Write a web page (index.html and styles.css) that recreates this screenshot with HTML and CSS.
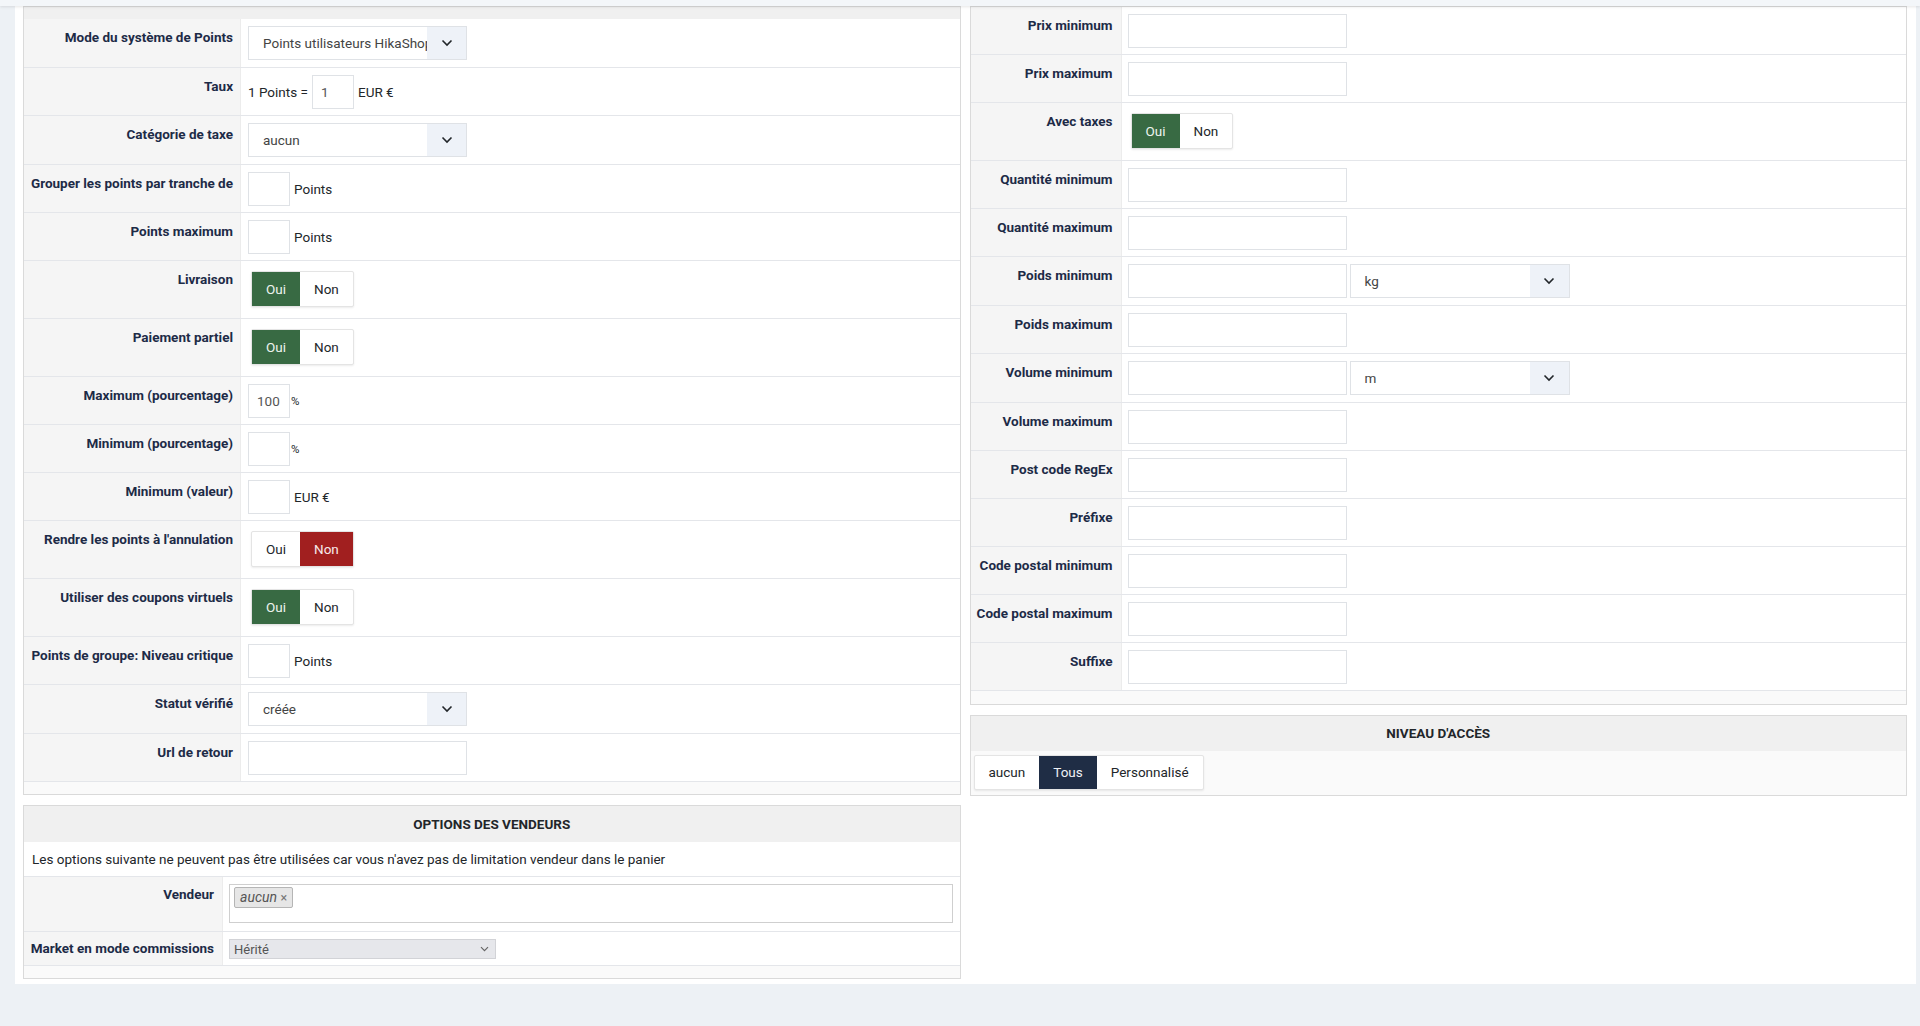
FILE: index.html
```html
<!DOCTYPE html>
<html lang="fr">
<head>
    <meta charset="UTF-8">
    <title>Fidélité - Points</title>
    <link rel="stylesheet" href="styles.css">
</head>
<body>
<div class="topbar"></div>

<div class="page">
    <div class="cols">

        <div class="col">
            <div class="panel panel-points">
                <div class="panel-head panel-head-cut"></div>

                <div class="row">
                    <div class="lbl">Mode du système de Points</div>
                    <div class="fld fld-sel">
                        <div class="select"><span class="select-val">Points utilisateurs HikaShop</span><span class="select-arrow"><svg width="12" height="8" viewBox="0 0 12 8"><path d="M1.5 1.5L6 6l4.5-4.5" fill="none" stroke="#22262a" stroke-width="1.6"/></svg></span></div>
                    </div>
                </div>
                <div class="row">
                    <div class="lbl">Taux</div>
                    <div class="fld fld-rate">
                        <span class="txt">1 Points =</span>
                        <input class="inp inp-s" value="1">
                        <span class="txt">EUR €</span>
                    </div>
                </div>
                <div class="row">
                    <div class="lbl">Catégorie de taxe</div>
                    <div class="fld fld-sel">
                        <div class="select"><span class="select-val">aucun</span><span class="select-arrow"><svg width="12" height="8" viewBox="0 0 12 8"><path d="M1.5 1.5L6 6l4.5-4.5" fill="none" stroke="#22262a" stroke-width="1.6"/></svg></span></div>
                    </div>
                </div>
                <div class="row">
                    <div class="lbl">Grouper les points par tranche de</div>
                    <div class="fld"><input class="inp inp-s"><span class="unit">Points</span></div>
                </div>
                <div class="row">
                    <div class="lbl">Points maximum</div>
                    <div class="fld"><input class="inp inp-s"><span class="unit">Points</span></div>
                </div>
                <div class="row">
                    <div class="lbl">Livraison</div>
                    <div class="fld">
                        <div class="switch"><span class="opt opt-yes">Oui</span><span class="opt">Non</span></div>
                    </div>
                </div>
                <div class="row">
                    <div class="lbl">Paiement partiel</div>
                    <div class="fld">
                        <div class="switch"><span class="opt opt-yes">Oui</span><span class="opt">Non</span></div>
                    </div>
                </div>
                <div class="row">
                    <div class="lbl">Maximum (pourcentage)</div>
                    <div class="fld"><input class="inp inp-s" value="100"><span class="pct">%</span></div>
                </div>
                <div class="row">
                    <div class="lbl">Minimum (pourcentage)</div>
                    <div class="fld"><input class="inp inp-s"><span class="pct">%</span></div>
                </div>
                <div class="row">
                    <div class="lbl">Minimum (valeur)</div>
                    <div class="fld"><input class="inp inp-s"><span class="unit">EUR €</span></div>
                </div>
                <div class="row">
                    <div class="lbl">Rendre les points à l'annulation</div>
                    <div class="fld">
                        <div class="switch"><span class="opt">Oui</span><span class="opt opt-no">Non</span></div>
                    </div>
                </div>
                <div class="row">
                    <div class="lbl">Utiliser des coupons virtuels</div>
                    <div class="fld">
                        <div class="switch"><span class="opt opt-yes">Oui</span><span class="opt">Non</span></div>
                    </div>
                </div>
                <div class="row">
                    <div class="lbl">Points de groupe: Niveau critique</div>
                    <div class="fld"><input class="inp inp-s"><span class="unit">Points</span></div>
                </div>
                <div class="row">
                    <div class="lbl">Statut vérifié</div>
                    <div class="fld fld-sel">
                        <div class="select"><span class="select-val">créée</span><span class="select-arrow"><svg width="12" height="8" viewBox="0 0 12 8"><path d="M1.5 1.5L6 6l4.5-4.5" fill="none" stroke="#22262a" stroke-width="1.6"/></svg></span></div>
                    </div>
                </div>
                <div class="row">
                    <div class="lbl">Url de retour</div>
                    <div class="fld"><input class="inp inp-l"></div>
                </div>

                <div class="panel-foot"></div>
            </div>

            <div class="panel panel-vendor">
                <div class="panel-head">Options des vendeurs</div>
                <div class="row row-note">Les options suivante ne peuvent pas être utilisées car vous n'avez pas de limitation vendeur dans le panier</div>
                <div class="row">
                    <div class="lbl">Vendeur</div>
                    <div class="fld fld-tags">
                        <div class="tagbox"><span class="tag">aucun <span class="tag-x">×</span></span></div>
                    </div>
                </div>
                <div class="row">
                    <div class="lbl lbl-mid">Market en mode commissions</div>
                    <div class="fld fld-mini">
                        <div class="mini-select">Hérité<svg width="9" height="6" viewBox="0 0 9 6"><path d="M1 1.2l3.5 3.5L8 1.2" fill="none" stroke="#666" stroke-width="1.2"/></svg></div>
                    </div>
                </div>
                <div class="panel-foot"></div>
            </div>
        </div>

        <div class="col">
            <div class="panel panel-limits">
                <div class="row">
                    <div class="lbl">Prix minimum</div>
                    <div class="fld"><input class="inp inp-l"></div>
                </div>
                <div class="row">
                    <div class="lbl">Prix maximum</div>
                    <div class="fld"><input class="inp inp-l"></div>
                </div>
                <div class="row">
                    <div class="lbl">Avec taxes</div>
                    <div class="fld">
                        <div class="switch"><span class="opt opt-yes">Oui</span><span class="opt">Non</span></div>
                    </div>
                </div>
                <div class="row">
                    <div class="lbl">Quantité minimum</div>
                    <div class="fld"><input class="inp inp-l"></div>
                </div>
                <div class="row">
                    <div class="lbl">Quantité maximum</div>
                    <div class="fld"><input class="inp inp-l"></div>
                </div>
                <div class="row">
                    <div class="lbl">Poids minimum</div>
                    <div class="fld fld-sel fld-pair">
                        <input class="inp inp-l">
                        <div class="select select-unit"><span class="select-val">kg</span><span class="select-arrow"><svg width="12" height="8" viewBox="0 0 12 8"><path d="M1.5 1.5L6 6l4.5-4.5" fill="none" stroke="#22262a" stroke-width="1.6"/></svg></span></div>
                    </div>
                </div>
                <div class="row">
                    <div class="lbl">Poids maximum</div>
                    <div class="fld"><input class="inp inp-l"></div>
                </div>
                <div class="row">
                    <div class="lbl">Volume minimum</div>
                    <div class="fld fld-sel fld-pair">
                        <input class="inp inp-l">
                        <div class="select select-unit"><span class="select-val">m</span><span class="select-arrow"><svg width="12" height="8" viewBox="0 0 12 8"><path d="M1.5 1.5L6 6l4.5-4.5" fill="none" stroke="#22262a" stroke-width="1.6"/></svg></span></div>
                    </div>
                </div>
                <div class="row">
                    <div class="lbl">Volume maximum</div>
                    <div class="fld"><input class="inp inp-l"></div>
                </div>
                <div class="row">
                    <div class="lbl">Post code RegEx</div>
                    <div class="fld"><input class="inp inp-l"></div>
                </div>
                <div class="row">
                    <div class="lbl">Préfixe</div>
                    <div class="fld"><input class="inp inp-l"></div>
                </div>
                <div class="row">
                    <div class="lbl">Code postal minimum</div>
                    <div class="fld"><input class="inp inp-l"></div>
                </div>
                <div class="row">
                    <div class="lbl">Code postal maximum</div>
                    <div class="fld"><input class="inp inp-l"></div>
                </div>
                <div class="row">
                    <div class="lbl">Suffixe</div>
                    <div class="fld"><input class="inp inp-l"></div>
                </div>
                <div class="panel-foot panel-foot-r"></div>
            </div>

            <div class="panel panel-access">
                <div class="panel-head panel-head-s">Niveau d'accès</div>
                <div class="access-body">
                    <div class="switch switch-flat"><span class="opt">aucun</span><span class="opt opt-dark">Tous</span><span class="opt">Personnalisé</span></div>
                </div>
            </div>
        </div>

    </div>
</div>
</body>
</html>
```

FILE: styles.css
```css
body{
    margin:0;
    background:#edf1f5;
    font-family:Roboto, "Liberation Sans", sans-serif;
    font-size:13.5px;
    color:#22262a;
}
.topbar{
    position:relative;
    z-index:2;
    height:6px;
    background:#f3f6f9;
    box-shadow:0 1px 3px rgba(0,0,0,.1);
}
.page{
    margin:0 4px 0 15px;
    background:#fff;
    padding:0 9px 5px 8px;
}
.cols{
    display:grid;
    grid-template-columns:1fr 1fr;
    column-gap:9px;
    align-items:start;
}
.panel{
    border:1px solid #dadada;
    background:#fff;
}
.panel + .panel{
    margin-top:10px;
}
.panel-head{
    height:36px;
    line-height:36px;
    background:#f0f0f0;
    text-align:center;
    font-weight:700;
    text-transform:uppercase;
    color:#22262a;
}
.panel-head-cut{
    height:12px;
}
.panel-head-s{
    height:35px;
    line-height:35px;
}
.panel-foot{
    height:12px;
    background:#fafafa;
}
.panel-foot-r{
    height:13px;
}

/* one label / field line */
.row{
    display:flex;
    border-bottom:1px solid #e4e6ea;
}
.lbl{
    flex:none;
    box-sizing:border-box;
    padding:8px 7px 0 0;
    background:#f5f5f5;
    border-right:1px solid #ececec;
    text-align:right;
    font-weight:700;
    line-height:20px;
    color:#1d2b47;
    white-space:nowrap;
}
.panel-points .lbl{ width:217px; }
.panel-limits .lbl{ width:151px; padding-right:8px; }
.panel-vendor .lbl{ width:199px; padding:7px 8px 0 0; }
.panel-vendor .lbl-mid{ padding-top:6px; }

.fld{
    flex:1;
    display:flex;
    align-items:center;
    padding:7px 7px 6px;
}
.panel-limits .fld{ padding-left:6px; }
.fld-sel{ padding-bottom:7px; }
.fld-rate{ gap:4px; }
.fld-pair{ gap:3px; }
.fld-tags{ padding:7px 7px 8px 6px; }
.fld-mini{ padding:7px 7px 6px 6px; }

.inp{
    box-sizing:border-box;
    height:34px;
    border:1px solid #dfe2e6;
    background:#fff;
    font:13.5px Roboto, "Liberation Sans", sans-serif;
    color:#555;
    padding:0 10px;
    margin:0;
    outline:none;
}
.inp-s{ width:42px; padding:0 8px; }
.inp-l{ width:219px; }
.unit{
    margin-left:4px;
}
.pct{
    margin-left:1px;
    font-size:11.5px;
}

/* dropdowns */
.select{
    box-sizing:border-box;
    display:flex;
    width:219px;
    height:34px;
    border:1px solid #dfe2e6;
    background:#fff;
}
.select-unit{ width:220px; }
.select-val{
    flex:1;
    padding-left:14px;
    line-height:32px;
    color:#444;
    white-space:nowrap;
    overflow:hidden;
}
.select-arrow{
    flex:none;
    width:39px;
    background:#eef2f8;
    display:flex;
    align-items:center;
    justify-content:center;
}

/* oui / non switches */
.switch{
    display:inline-flex;
    height:36px;
    margin:3px 0 5px 3px;
    border:1px solid #e4e4e4;
    border-radius:2px;
    box-shadow:0 1px 2px rgba(0,0,0,.08);
    box-sizing:border-box;
    background:#fff;
}
.opt{
    padding:0 14px;
    line-height:34px;
    color:#22262a;
}
.opt-yes{ background:#386a43; color:#eef4ef; }
.opt-no{ background:#a11f1f; color:#f7eaea; }
.opt-dark{ background:#1f2d45; color:#eef1f5; }

.access-body{
    background:#fafafa;
    padding:4px 3px 5px;
}
.switch-flat{
    height:35px;
    margin:0;
}
.switch-flat .opt{
    line-height:33px;
}

.row-note{
    display:block;
    padding:7px 8px;
    line-height:20px;
}
.tagbox{
    box-sizing:border-box;
    width:100%;
    height:39px;
    border:1px solid #cfcfcf;
    padding:2px 4px;
}
.tag{
    display:inline-block;
    height:21px;
    line-height:19px;
    box-sizing:border-box;
    padding:0 5px;
    background:#e6e6e6;
    border:1px solid #b5b5b5;
    border-radius:2px;
    font-style:italic;
    font-size:14px;
    color:#555;
}
.tag-x{
    font-style:normal;
    color:#777;
    font-size:12.5px;
}
.mini-select{
    box-sizing:border-box;
    display:flex;
    align-items:center;
    justify-content:space-between;
    width:267px;
    height:20px;
    padding:0 6px 0 4px;
    background:#e6e7eb;
    border:1px solid #d2d3d7;
    color:#555;
    font-size:13px;
}
```
